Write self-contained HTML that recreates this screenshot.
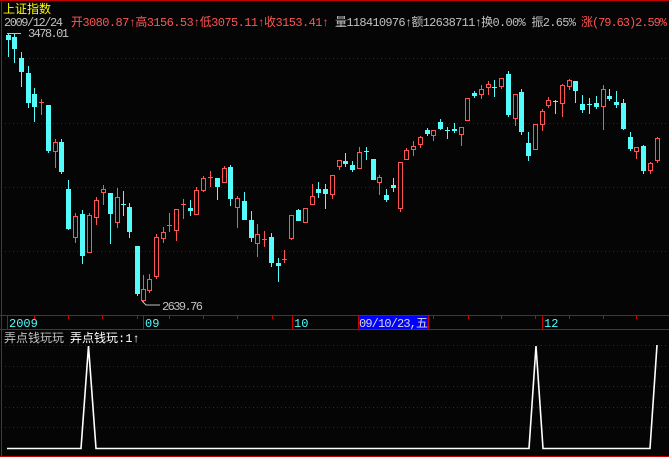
<!DOCTYPE html>
<html><head><meta charset="utf-8"><style>
html,body{margin:0;padding:0;background:#000;width:669px;height:457px;overflow:hidden}
svg{display:block}
text{font-family:"Liberation Mono","Noto Sans CJK SC",monospace;}
</style></head><body>
<svg width="669" height="457" viewBox="0 0 669 457" xmlns="http://www.w3.org/2000/svg">
<rect width="669" height="457" fill="#050505"/>
<path d="M0 0.5H669M1.5 0V457M0 456.5H669M0 315.5H669M0 329.5H669" stroke="#c80000" stroke-width="1" fill="none"/>
<g stroke="#900000" stroke-width="1" stroke-dasharray="1 3" fill="none">
<path d="M5 58.5H669M5 123.5H669M5 187.5H669M5 251.5H669"/>
<path d="M5 345.5H669M5 366.5H669M5 386.5H669M5 407.5H669M5 427.5H669"/>
</g>
<path d="M34.5 316V319M68.5 316V319M102.5 316V319M137.5 316V319M169.5 316V319M203.5 316V319M237.5 316V319M272.5 316V319M433.5 316V319M468.5 316V319M501.5 316V319M535.5 316V319M569.5 316V319M603.5 316V319M636.5 316V319M7.5 316V329M143.5 316V329M292.5 316V329M542.5 316V329" stroke="#c80000" fill="none"/>
<rect x="358" y="316" width="71" height="13" fill="#0000ff"/>
<path d="M358.5 316V329M428.5 316V329" stroke="#c80000"/>
<g font-size="12" fill="#54fcfc">
<text x="9" y="327">2009</text>
<text x="145" y="327">09</text>
<text x="294" y="327">10</text>
<text x="544" y="327">12</text>
</g>
<text x="359" y="327" font-size="12" fill="#d8d8d8" textLength="69">09/10/23,五</text>
<text x="3" y="13" font-size="12" fill="#ffff00" font-family="Noto Sans CJK SC, sans-serif">上证指数</text>
<g font-size="12">
<text x="4" y="26" fill="#c0c0c0" textLength="59">2009/12/24</text>
<text x="71" y="26" fill="#ff5454" textLength="258">开3080.87↑高3156.53↑低3075.11↑收3153.41↑</text>
<text x="335" y="26" fill="#c0c0c0" textLength="241">量118410976↑额12638711↑换0.00% 振2.65%</text>
<text x="581" y="26" fill="#ff5454" textLength="86">涨(79.63)2.59%</text>
</g>
<path d="M7 33.5H21" stroke="#c0c0c0"/>
<text x="28" y="37" font-size="12" fill="#c0c0c0" textLength="41">3478.01</text>
<path d="M142 301L146 305H160" stroke="#c0c0c0" fill="none"/>
<text x="162" y="310" font-size="12" fill="#c0c0c0" textLength="41">2639.76</text>
<path stroke="#54fcfc" fill="none" d="M8.5 33V57M14.5 34V63M21.5 52V87M28.5 66V108M34.5 88V122M48.5 105V153M61.5 139V174M68.5 180V230M82.5 210V264M110.5 193V244M123.5 191V216M129.5 203V238M137.5 246V296M190.5 200V216M217.5 178V200M230.5 165V206M244.5 192V220M251.5 211V242M271.5 233V267M278.5 258V282M298.5 209V221M318.5 182V198M325.5 184V209M345.5 153V167M352.5 161V172M366.5 147V160M373.5 159V180M386.5 189V202M393.5 178V192M427.5 128V136M440.5 119V130M447.5 127V139M454.5 123V133M474.5 91V98M494.5 80V97M508.5 71V117M521.5 89V135M528.5 132V161M555.5 100V114M575.5 81V103M582.5 95V113M589.5 98V114M596.5 96V109M609.5 89V101M616.5 91V108M623.5 99V130M630.5 132V151M643.5 145V174"/>
<path stroke="#ff5454" fill="none" d="M41.5 99V115M55.5 139V168M75.5 213V243M89.5 213V252M96.5 197V225M103.5 185V205M117.5 188V228M143.5 275V302M149.5 274V293M156.5 234V279M163.5 227V243M169.5 213V232M176.5 209V241M183.5 199V219M196.5 187V214M203.5 176V192M210.5 171V187M224.5 166V182M237.5 196V228M257.5 224V257M264.5 231V247M284.5 250V263M291.5 215V240M305.5 208V223M312.5 184V205M332.5 175V199M339.5 160V170M359.5 147V168M379.5 175V195M400.5 162V212M406.5 148V159M413.5 141V156M420.5 136V148M433.5 130V141M461.5 127V146M467.5 98V120M481.5 85V99M488.5 81V95M501.5 78V89M515.5 94V126M535.5 124V149M542.5 109V131M548.5 97V108M562.5 84V117M569.5 79V90M603.5 85V130M636.5 147V159M650.5 162V174M657.5 137V163"/>
<g fill="#54fcfc">
<rect x="6" y="35" width="5" height="5"/><rect x="12" y="37" width="5" height="12"/><rect x="19" y="58" width="5" height="14"/><rect x="26" y="73" width="5" height="30"/><rect x="32" y="94" width="5" height="13"/><rect x="46" y="105" width="5" height="46"/><rect x="59" y="142" width="5" height="30"/><rect x="66" y="189" width="5" height="40"/><rect x="80" y="214" width="5" height="42"/><rect x="108" y="193" width="5" height="21"/><rect x="121" y="204" width="5" height="1"/><rect x="127" y="207" width="5" height="25"/><rect x="135" y="246" width="5" height="48"/><rect x="188" y="208" width="5" height="3"/><rect x="215" y="178" width="5" height="9"/><rect x="228" y="167" width="5" height="32"/><rect x="242" y="201" width="5" height="19"/><rect x="249" y="220" width="5" height="18"/><rect x="269" y="237" width="5" height="26"/><rect x="276" y="263" width="5" height="3"/><rect x="296" y="210" width="5" height="11"/><rect x="316" y="189" width="5" height="4"/><rect x="323" y="189" width="5" height="5"/><rect x="343" y="161" width="5" height="3"/><rect x="350" y="165" width="5" height="5"/><rect x="364" y="151" width="5" height="1"/><rect x="371" y="159" width="5" height="21"/><rect x="384" y="195" width="5" height="5"/><rect x="391" y="185" width="5" height="3"/><rect x="425" y="130" width="5" height="4"/><rect x="438" y="122" width="5" height="7"/><rect x="445" y="130" width="5" height="1"/><rect x="452" y="129" width="5" height="2"/><rect x="472" y="93" width="5" height="3"/><rect x="492" y="87" width="5" height="1"/><rect x="506" y="74" width="5" height="41"/><rect x="519" y="92" width="5" height="40"/><rect x="526" y="143" width="5" height="13"/><rect x="553" y="101" width="5" height="1"/><rect x="573" y="81" width="5" height="10"/><rect x="580" y="104" width="5" height="6"/><rect x="587" y="104" width="5" height="1"/><rect x="594" y="103" width="5" height="4"/><rect x="607" y="96" width="5" height="3"/><rect x="614" y="102" width="5" height="3"/><rect x="621" y="103" width="5" height="26"/><rect x="628" y="137" width="5" height="12"/><rect x="641" y="146" width="5" height="25"/>
</g>
<g fill="#050505" stroke="#ff5454">
<rect x="53.5" y="142.5" width="4" height="9"/><rect x="73.5" y="216.5" width="4" height="21"/><rect x="87.5" y="215.5" width="4" height="37"/><rect x="94.5" y="200.5" width="4" height="17"/><rect x="101.5" y="189.5" width="4" height="3"/><rect x="115.5" y="197.5" width="4" height="25"/><rect x="141.5" y="289.5" width="4" height="11"/><rect x="147.5" y="279.5" width="4" height="11"/><rect x="154.5" y="237.5" width="4" height="39"/><rect x="161.5" y="232.5" width="4" height="6"/><rect x="174.5" y="209.5" width="4" height="21"/><rect x="194.5" y="190.5" width="4" height="24"/><rect x="201.5" y="178.5" width="4" height="12"/><rect x="222.5" y="168.5" width="4" height="14"/><rect x="235.5" y="198.5" width="4" height="9"/><rect x="255.5" y="234.5" width="4" height="9"/><rect x="289.5" y="215.5" width="4" height="23"/><rect x="303.5" y="208.5" width="4" height="14"/><rect x="310.5" y="196.5" width="4" height="8"/><rect x="330.5" y="175.5" width="4" height="19"/><rect x="337.5" y="160.5" width="4" height="6"/><rect x="357.5" y="152.5" width="4" height="16"/><rect x="377.5" y="177.5" width="4" height="5"/><rect x="398.5" y="162.5" width="4" height="46"/><rect x="404.5" y="150.5" width="4" height="9"/><rect x="411.5" y="146.5" width="4" height="3"/><rect x="418.5" y="137.5" width="4" height="7"/><rect x="431.5" y="130.5" width="4" height="5"/><rect x="459.5" y="127.5" width="4" height="7"/><rect x="465.5" y="98.5" width="4" height="22"/><rect x="479.5" y="89.5" width="4" height="5"/><rect x="486.5" y="84.5" width="4" height="3"/><rect x="499.5" y="78.5" width="4" height="8"/><rect x="513.5" y="94.5" width="4" height="24"/><rect x="533.5" y="124.5" width="4" height="25"/><rect x="540.5" y="111.5" width="4" height="13"/><rect x="546.5" y="100.5" width="4" height="5"/><rect x="560.5" y="85.5" width="4" height="18"/><rect x="567.5" y="80.5" width="4" height="6"/><rect x="601.5" y="89.5" width="4" height="17"/><rect x="634.5" y="147.5" width="4" height="4"/><rect x="648.5" y="163.5" width="4" height="7"/><rect x="655.5" y="138.5" width="4" height="22"/>
</g>
<g fill="#ff5454">
<rect x="39" y="102" width="5" height="1"/><rect x="167" y="225" width="5" height="1"/><rect x="181" y="204" width="5" height="1"/><rect x="208" y="177" width="5" height="1"/><rect x="262" y="239" width="5" height="1"/><rect x="282" y="259" width="5" height="1"/>
</g>
<text x="4" y="342" font-size="12" fill="#c0c0c0" font-family="Noto Sans CJK SC, sans-serif">弄点钱玩玩</text>
<text x="70" y="342" font-size="12" fill="#ffffff" font-family="Noto Sans CJK SC, sans-serif">弄点钱玩:1↑</text>
<polyline points="7,448.5 81,448.5 88.5,346 96,448.5 529,448.5 536,346 543,448.5 650,448.5 657,345" fill="none" stroke="#ffffff" stroke-width="1.6"/>
</svg>
</body></html>
